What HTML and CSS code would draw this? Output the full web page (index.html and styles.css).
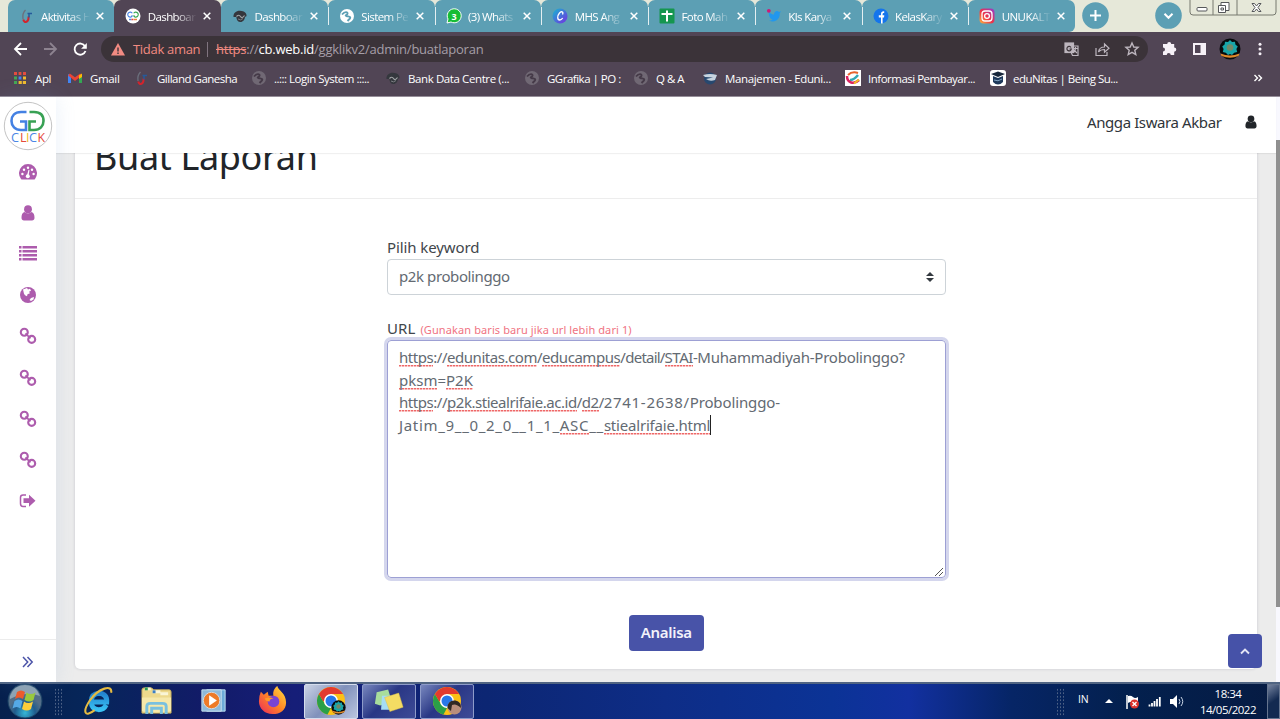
FILE: index.html
```html
<!DOCTYPE html>
<html lang="id">
<head>
<meta charset="utf-8">
<title>Dashboard</title>
<link rel="stylesheet" href="styles.css">
</head>
<body>
<svg class="defs" width="0" height="0">
  <defs>
    <symbol id="x" viewBox="0 0 8 8"><path d="M.7.7l6.6 6.6M7.3.7L.7 7.3" stroke="#fff" stroke-width="1.5"/></symbol>
    <symbol id="gil" viewBox="0 0 16 16"><path d="M6.500 2C4 4.500 3.500 8 4 11" stroke="#6b6f7c" stroke-width="1.300" fill="none"/><path d="M4.300 11.500c.7 4 5.700 3 5.200-3" stroke="#d3232c" stroke-width="2" fill="none"/><path d="M8.500 5.500h4.500M10 5.500v4" stroke="#255a9b" stroke-width="1.500" fill="none"/></symbol>
    <symbol id="mask" viewBox="0 0 16 16"><path d="M1.500 9C1 5 4.500 2.500 8 2.700c4.500 0 7 2.800 6.500 5.300-.5 1-1 .8-1.500.5 0 3-2 5.500-4.500 5.500S4.500 12 4.300 9z" fill="#34373d"/><path d="M4.500 8.500q2.500-2.500 4 0t4-1" stroke="#a3a6a8" stroke-width="1.200" fill="none"/><path d="M6 11q2.500 2 5-.5" stroke="#7b7e83" fill="none"/></symbol>
    <symbol id="globe" viewBox="0 0 16 16"><circle cx="8" cy="8" r="7" fill="currentColor"/><path d="M3 6.500c3-3.500 6-2.500 5.500-.8S5 7.500 8 8.200s4 .6 2.800 2.400L8.500 13" stroke="var(--cut)" stroke-width="1.900" fill="none"/></symbol>
    <symbol id="chain" viewBox="0 0 18 18"><g fill="none" stroke="#ad5cad" stroke-width="2.100"><circle cx="5.300" cy="5.200" r="3.500"/><circle cx="12.700" cy="12.400" r="3.500"/><path d="M6.500 6.300l5 5" stroke-width="1.800"/></g></symbol>
    <symbol id="person" viewBox="0 0 14 16"><circle cx="7" cy="4.200" r="3.900"/><path d="M3.600 7C1.200 7.400.5 10 .5 12.800.5 14.600 1.500 15.500 3 15.500h8c1.500 0 2.500-.9 2.500-2.700 0-2.800-.7-5.400-3.100-5.800C8.800 8.800 5.200 8.800 3.600 7z"/></symbol>
    <symbol id="chrome" viewBox="0 0 30 30"><circle cx="15" cy="15" r="14" fill="#fbc116"/><path d="M2.900 8l6.300 10.500L15 22l-3.500 6.600A14 14 0 0 1 2.900 8z" fill="#2b9f48"/><path d="M2.900 8A14 14 0 0 1 27.100 8H15v7H7z" fill="#e33b2e"/><circle cx="15" cy="15" r="7" fill="#fff"/><circle cx="15" cy="15" r="5.500" fill="#2878e8"/></symbol>
    <symbol id="crest" viewBox="0 0 22 22"><circle cx="11" cy="11" r="10.500" fill="#080b0d"/><path d="M11 2l2 2 3-.3.400 2.800 2.400 2-1.400 2.500.8 3-3 .8L13 17l-2-1-2 1-2.200-2.200-3-.8.800-3L3.200 8.500l2.400-2L6 3.700 9 4z" fill="#18a5a8"/><circle cx="11" cy="9.500" r="3.300" fill="#718a68"/><path d="M1.500 15.500q9.500 4 19 0l-1 2.500q-8.500 3.500-17 0z" fill="#e08a2b"/></symbol>
  </defs>
</svg>

<header class="browser">
  <div class="tabs">
    <div class="tab"><svg class="fav"><use href="#gil"/></svg><span>Aktivitas H</span><svg class="close"><use href="#x"/></svg></div>
    <div class="tab active"><svg class="fav" viewBox="0 0 16 16"><circle cx="8" cy="8" r="7.500" fill="#fff"/><path d="M7.300 5.200A2.500 2.500 0 1 0 7.300 8H6" stroke="#4c86e6" fill="none" stroke-width="1.100"/><path d="M8.700 5.200A2.500 2.500 0 1 1 8.700 8H10" stroke="#39a853" fill="none" stroke-width="1.100"/><path d="M4 11.500h2.500" stroke="#4c86e6" stroke-width="1.500"/><path d="M6.500 11.500h2" stroke="#e94335" stroke-width="1.500"/><path d="M9 11.500h3" stroke="#e9873c" stroke-width="1.500"/></svg><span>Dashboar</span><svg class="close"><use href="#x"/></svg></div>
    <div class="tab"><svg class="fav"><use href="#mask"/></svg><span>Dashboar</span><svg class="close"><use href="#x"/></svg></div>
    <div class="tab sep"><svg class="fav light"><use href="#globe"/></svg><span>Sistem Pe</span><svg class="close"><use href="#x"/></svg></div>
    <div class="tab sep"><svg class="fav" viewBox="0 0 16 16"><path d="M1 15l1-4a7 7 0 1 1 3 3z" fill="#16bd35" stroke="#fff"/><text x="8.200" y="11.500" class="wa">3</text></svg><span>(3) Whats</span><svg class="close"><use href="#x"/></svg></div>
    <div class="tab sep"><svg class="fav" viewBox="0 0 16 16"><defs><linearGradient id="cv" y2="1"><stop stop-color="#14b9d0"/><stop offset="1" stop-color="#782be3"/></linearGradient></defs><circle cx="8" cy="8" r="7.500" fill="url(#cv)"/><path d="M10.500 6.500c1.500-3-1.500-3.500-3-1.500-2.500 3-2.300 7 .2 7 1.300 0 2.300-1 3-2" stroke="#fff" stroke-width="1.300" fill="none"/></svg><span>MHS Ang</span><svg class="close"><use href="#x"/></svg></div>
    <div class="tab sep"><svg class="fav" viewBox="0 0 16 16"><rect x=".5" y=".5" width="15" height="15" rx="1" fill="#15964f"/><path d="M2.500 6h11M8 2.500v11" stroke="#fff" stroke-width="2"/></svg><span>Foto Mah</span><svg class="close"><use href="#x"/></svg></div>
    <div class="tab sep"><svg class="fav" viewBox="0 0 16 16"><path d="M3 4c2 2.200 3.500 2.500 5 2.500C8 3 11.500 2 13 4l2-.7-1.300 2C14.300 11 9 15.500 3 12.500c2 0 3-.3 3.500-1C3.500 10.500 2.500 7 3 4z" fill="#2197ee"/><circle cx="2.800" cy="2.800" r="1.900" fill="#cd1b76"/></svg><span>Kls Karya</span><svg class="close"><use href="#x"/></svg></div>
    <div class="tab sep"><svg class="fav" viewBox="0 0 16 16"><circle cx="8" cy="8" r="7.500" fill="#1475ec"/><path d="M8 15.500V9.500H5.800V7.300H8V6c0-2.200 1.200-3 3.200-2.800v1.900c-1.300 0-1.600.3-1.600 1.200v1h1.700l-.3 2.200H9.600v6z" fill="#fff"/></svg><span>KelasKary</span><svg class="close"><use href="#x"/></svg></div>
    <div class="tab sep last"><svg class="fav" viewBox="0 0 16 16"><defs><linearGradient id="ig" x1="0" y1="1" x2="1" y2="0"><stop stop-color="#fdb73e"/><stop offset=".45" stop-color="#ee3345"/><stop offset="1" stop-color="#913cd2"/></linearGradient></defs><rect x=".5" y=".5" width="15" height="15" rx="4" fill="url(#ig)"/><g stroke="#fff" fill="none" stroke-width="1.300"><rect x="3" y="3" width="10" height="10" rx="3"/><circle cx="8" cy="8" r="2.400"/></g></svg><span>UNUKALT</span><svg class="close"><use href="#x"/></svg></div>
    <svg class="round plus" viewBox="0 0 27 27"><circle cx="13.500" cy="13.500" r="13.300"/><path d="M13.500 8v11M8 13.500h11"/></svg>
    <svg class="round chev" viewBox="0 0 27 27"><circle cx="13.500" cy="13.500" r="13.300"/><path d="M9.500 11.800l4 4 4-4"/></svg>
    <svg class="winctl" viewBox="0 0 88 17"><path d="M1 0v12q0 3 3 3h80q3 0 3-3V0M24 0v15M48 0v15" fill="none" stroke="#77796f"/><g fill="#fff" stroke="#55575a"><rect x="8" y="7.500" width="10" height="3.500" rx="1"/><path d="M32 2.500h8v8h-8z"/><path d="M29.500 5.500h7v7h-7z"/><path d="M32 8h2.500v2H32z"/><path d="M63 3.500h2.500l2 2.500 2-2.500H72L69 7.500l3 4h-2.500l-2-2.500-2 2.500H63l3-4z"/></g></svg>
  </div>

  <div class="toolbar">
    <svg class="nav" viewBox="0 0 90 20"><g fill="none" stroke-width="1.800"><path d="M18 10H6M12 4L6 10l6 6" stroke="#fff"/><path d="M35 10h12M41 4l6 6-6 6" stroke="#8d8390"/><path d="M76 7.200A5.600 5.600 0 1 0 76.500 12" stroke="#fff"/></g><path d="M77.800 4v5.700h-5.700z" fill="#fff"/></svg>
    <div class="address">
      <svg class="warn" viewBox="0 0 14 13"><path d="M7 0l7 12.500H0z" fill="#f28b82"/><path d="M7 4.500v4M7 9.500v1.500" stroke="#3b3339" stroke-width="1.400"/></svg>
      <span class="unsafe">Tidak aman</span><i class="bar"></i>
      <span class="url"><s>https</s>://<b>cb.web.id</b>/ggklikv2/admin/buatlaporan</span>
      <svg class="acts" viewBox="0 0 76 16"><g fill="none" stroke="#bdb6be" stroke-width="1.200"><rect x="1" y="2" width="8.500" height="9.500" fill="#bdb6be"/><path d="M8 5h6v9.500H8.500L7 11"/><path d="M9 7.500h5M11.500 6v1.500c0 2-1 3-2 4M10 9l3 3"/><path d="M7 6.500A2.200 2.200 0 1 0 7.300 8H5.500" stroke="#3b3339"/><path d="M32 7v7.500h11V11M34.500 11c.5-3.500 3-5 6-5V3l4.500 4.200-4.500 4V8.500c-2.500 0-4.500.5-6 2.500z"/><path d="M68 2l1.800 4 4.300.4-3.300 2.900 1 4.200L68 11.300l-3.800 2.200 1-4.200-3.300-2.900 4.300-.4z" stroke-width="1.400"/></g></svg>
    </div>
    <svg class="ext" viewBox="0 0 120 24"><g fill="#f6f1f7"><path d="M15 7h3.200a2 2 0 0 1 4 0h3v3.500a2 2 0 0 1 0 4.200V18h-3.500a2 2 0 0 0-4 0H14v-3.600a2 2 0 0 0 0-4V7z"/><path d="M44 6h13v12H44zm2 2v8h5.500V8z" fill-rule="evenodd"/><circle cx="111" cy="7.300" r="1.500"/><circle cx="111" cy="12" r="1.500"/><circle cx="111" cy="16.800" r="1.500"/></g><use href="#crest" x="70" y="1" width="22" height="22"/></svg>
  </div>

  <div class="bookmarks">
    <a class="w1"><svg viewBox="0 0 16 16"><path d="M2 3.500h3" stroke="#e34d3f" stroke-width="3"/><path d="M6.500 3.500h3" stroke="#e34d3f" stroke-width="3"/><path d="M11 3.500h3" stroke="#e34d3f" stroke-width="3"/><path d="M2 8h3M2 12.500h3" stroke="#44a854" stroke-width="3"/><path d="M6.500 8h3" stroke="#4285f4" stroke-width="3"/><path d="M11 8h3M6.500 12.500H14" stroke="#efba2e" stroke-width="3"/><path d="M5.700 2v12M10.300 2v12" stroke="#514555"/></svg><span>Apl</span></a>
    <a class="w2"><svg viewBox="0 0 16 16"><path d="M1 13V4l3 2v7z" fill="#4285f4"/><path d="M15 13V4l-3 2v7z" fill="#34a853"/><path d="M2 4.500l6 4.700 6-4.700" fill="none" stroke="#ea4335" stroke-width="2.800"/><path d="M12 5.500l3-2V7l-3 2z" fill="#fbbc04"/></svg><span>Gmail</span></a>
    <a class="w3"><svg><use href="#gil"/></svg><span>Gilland Ganesha</span></a>
    <a class="w4"><svg class="dim"><use href="#globe"/></svg><span>..::: Login System :::..</span></a>
    <a class="w5"><svg><use href="#mask"/></svg><span>Bank Data Centre (...</span></a>
    <a class="w6"><svg class="dim"><use href="#globe"/></svg><span>GGrafika | PO :</span></a>
    <a class="w7"><svg class="dim"><use href="#globe"/></svg><span>Q &amp; A</span></a>
    <a class="w8"><svg viewBox="0 0 16 16"><circle cx="8" cy="8.500" r="6" fill="#27486f"/><path d="M1 5q7-2 14 0l-2 5q-5 2-9-1l7-1.500-8-.5z" fill="#c8d4df"/></svg><span>Manajemen - Eduni...</span></a>
    <a class="w9"><svg viewBox="0 0 16 16"><path d="M0 0h16v16H0z" fill="#fff"/><path d="M3 5q4-4 10-2" stroke="#e8622b" stroke-width="2" fill="none"/><path d="M13 5Q9 10 5 10" stroke="#35a7b4" stroke-width="2.500" fill="none"/><path d="M2 6c0 7 7 9 12 4" stroke="#da2360" stroke-width="2.500" fill="none"/><path d="M9 13.500l5-4" stroke="#f2bd21" stroke-width="2"/></svg><span>Informasi Pembayar...</span></a>
    <a class="w10"><svg viewBox="0 0 16 16"><rect width="16" height="16" rx="3" fill="#fff"/><path d="M1 4l7-2.500L15 4 8 7z" fill="#17273b"/><path d="M3 6l5 2 5-2v6q-5 5-10 0z" fill="#1e395b"/><path d="M4 10q4 2 8-1" stroke="#7fa2c2" fill="none"/></svg><span>eduNitas | Being Su...</span></a>
    <svg class="over" viewBox="0 0 10 8"><path d="M1.500 1l3 3-3 3M5.500 1l3 3-3 3" stroke="#fff" stroke-width="1.400" fill="none"/></svg>
  </div>
</header>

<main class="page">
  <aside class="sidebar">
    <svg class="logo" viewBox="0 0 50 50"><circle cx="25" cy="25" r="23.700" fill="#fff" stroke="#c4c4c4"/><g fill="none" stroke-width="2.600"><path d="M23.500 11H18c-6.500 0-9.500 4-9.500 9s3.500 9 9.500 9h5v-8.500h-6" stroke="#4481e3"/><path d="M26.500 11H31c7.500 0 9.500 4 9.500 9S37 29 31 29h-4.500v-8.500H33" stroke="#38a154"/></g><g class="click"><text x="8" y="40.500" fill="#4b86e5" textLength="8" lengthAdjust="spacingAndGlyphs">C</text><text x="17" y="40.500" fill="#e5493a">L</text><text x="23" y="40.500" fill="#f0b91d">I</text><text x="26" y="40.500" fill="#4b86e5" textLength="8" lengthAdjust="spacingAndGlyphs">C</text><text x="34.500" y="40.500" fill="#e5493a" textLength="7.500" lengthAdjust="spacingAndGlyphs">K</text></g></svg>
    <nav>
      <a><svg viewBox="0 0 18 18"><path d="M2 16A9 9.200 0 1 1 16 16q-.5.500-1 .5H3q-.5 0-1-.5z"/><g fill="#fff"><circle cx="3.400" cy="11" r="1.200"/><circle cx="5" cy="6.700" r="1.200"/><circle cx="9" cy="4.700" r="1.200"/><circle cx="13" cy="6.700" r="1.200"/><circle cx="14.600" cy="11" r="1.200"/><circle cx="8.800" cy="13.200" r="2"/><path d="M8 12.500L9.500 6.800l1 .3-1 6z"/></g></svg></a>
      <a><svg><use href="#person" x="2" y="1" width="14" height="16"/></svg></a>
      <a><svg viewBox="0 0 18 18"><path d="M0 1h2.500v2.500H0zM3.500 1H18v2.500H3.500zM0 5h2.500v2.500H0zM3.500 5H18v2.500H3.500zM0 9h2.500v2.500H0zM3.500 9H18v2.500H3.500zM0 13h2.500v2.500H0zM3.500 13H18v2.500H3.500z"/></svg></a>
      <a><svg viewBox="0 0 18 18"><circle cx="9" cy="9" r="8"/><path d="M4 3.500l4-1.500 1 1.500 2-.8 1 2-2 1 1 1.500-2.500 1-.5 2-2-1-1-1.500z" fill="#fff"/><path d="M12 12l3-1-.5 2.500L12 15l-1.500-1z" fill="#fff"/></svg></a>
      <a><svg><use href="#chain"/></svg></a>
      <a><svg><use href="#chain"/></svg></a>
      <a><svg><use href="#chain"/></svg></a>
      <a><svg><use href="#chain"/></svg></a>
      <a><svg viewBox="0 0 18 18"><path d="M7 3H4Q1.500 3 1.500 5.500v6Q1.500 14.500 4 14.500h3" fill="none" stroke="#ad5cad" stroke-width="1.500"/><path d="M4.500 6.300H10V2.800l6.500 6-6.500 6v-3.800H4.500z"/></svg></a>
    </nav>
    <div class="expand"><svg viewBox="0 0 12 12"><path d="M1 1l4.700 5L1 11M5.500 1l4.700 5-4.700 5" stroke="#4b53a8" stroke-width="1.500" fill="none"/></svg></div>
  </aside>

  <section class="content">
    <div class="topbar"><span>Angga Iswara Akbar</span><svg><use href="#person"/></svg></div>
    <div class="scroll">
      <article class="card">
        <div class="head"><h1>Buat Laporan</h1></div>
        <form class="form">
          <label class="l1">Pilih keyword</label>
          <div class="select"><span>p2k probolinggo</span><svg viewBox="0 0 8 10"><path d="M4 0l4 4H0zM0 6h8l-4 4z" fill="#343a40"/></svg></div>
          <label class="l2">URL <small>(Gunakan baris baru jika url lebih dari 1)</small></label>
          <div class="area">
            <div class="tight"><u>https</u>://<u>edunitas.com</u>/<u>educampus</u>/<span class="detail">detail/</span><u>STAI</u>-<span class="uni">Muhammadiyah-Probolinggo?</span></div>
            <div><u>pksm</u>=<u>P2K</u></div>
            <div class="tight"><u>https</u>://<u>p2k.stiealrifaie.ac.id</u>/<u>d2</u>/<span class="wide">2741-2638/</span><span class="prob">Probolinggo-</span></div>
            <div class="tight"><span class="wide">Jatim_9__0_2_0__1_1_<u>ASC</u>__</span><u class="file">stiealrifaie.html</u><i class="caret"></i></div>
            <svg class="grip" viewBox="0 0 9 9"><path d="M0 9l8-8M4 9l4-4" stroke="#555" stroke-width="1"/></svg>
          </div>
          <button type="button"><span>Analisa</span></button>
        </form>
      </article>
    </div>
    <div class="totop"><svg viewBox="0 0 10 7"><path d="M1 5.500l4-4 4 4" stroke="#e4e5f4" stroke-width="1.900" fill="none"/></svg></div>
  </section>
  <div class="track"><i></i></div>
</main>

<footer class="taskbar">
  <div class="start"><svg viewBox="0 0 36 36"><defs><radialGradient id="orb" cy=".85"><stop stop-color="#35b7d8"/><stop offset=".6" stop-color="#205c8e"/><stop offset="1" stop-color="#536e88"/></radialGradient></defs><circle cx="18" cy="18" r="17" fill="url(#orb)" stroke="#1a4265"/><path d="M3 13Q7 2 18 2t15 11q-14-5-30 3z" fill="#cbd9df" opacity=".5"/><path d="M10 9q4-3 8 0l-2 7q-4-3-8 0z" fill="#ee5b2a"/><path d="M19.500 9.500q4 3 9 0l-2 7.500q-4 3-9 0z" fill="#9aca3c"/><path d="M7.500 18q4-3 8 0l-2 7.500q-4-3-8 0z" fill="#55a9e6"/><path d="M17 18.500q4 3 9 0L24 26q-4 3-9 0z" fill="#fdce3a"/></svg></div>
  <i class="dots"></i>
  <div class="app a1"><svg viewBox="0 0 32 32"><defs><linearGradient id="ie" y2="1" x2="0"><stop stop-color="#2383cf"/><stop offset="1" stop-color="#39c2f4"/></linearGradient></defs><path d="M24 20.500Q21.500 25.500 16 25.500 8.500 25 8.500 17T16.500 8.500Q25 9 24.500 17.500H9" stroke="url(#ie)" stroke-width="5" fill="none"/><path d="M29 8C31-1 16 3 7 16-1 28 2 34 12 26" stroke="#e5bb42" stroke-width="2.200" fill="none"/></svg></div>
  <div class="app a2"><svg viewBox="0 0 32 32"><path d="M1 29V5q0-2 2-2h8l2 2h16q2 0 2 2v22z" fill="#edd98d" stroke="#c8ae5c"/><path d="M4 4h6M12 7h8M20 9h8" stroke="#f9f5d7" stroke-width="3"/><path d="M4 4h3" stroke="#2d9b55" stroke-width="3"/><path d="M12 7h3" stroke="#3c7fc5" stroke-width="3"/><path d="M1 13h30v14q-15 3-30 0z" fill="#f6e8aa"/><path d="M6 30v-8q0-3 4-3h12q4 0 4 3v8M11 30v-6h10v6" fill="none" stroke="#78c0df" stroke-width="3"/></svg></div>
  <div class="app a3"><svg viewBox="0 0 32 32"><path d="M9 5h19v22H9z" fill="#6dabd8" stroke="#bfe0f4"/><path d="M4 5h20v22H4z" fill="#8db9da" stroke="#c6dfed"/><circle cx="14" cy="16" r="8.500" fill="#ed7a27" stroke="#d6dadd"/><path d="M11.500 10.500v11l8-5.500z" fill="#fff"/></svg></div>
  <div class="app a4"><svg viewBox="0 0 32 32"><defs><linearGradient id="ff" x1="1" x2="0" y2="1"><stop stop-color="#ffe440"/><stop offset=".5" stop-color="#ff8426"/><stop offset="1" stop-color="#eb265e"/></linearGradient></defs><path d="M4 7l3 3 4-3 1 4 5 0c-1-4 1-8 4-10 1 5 9 7 9 17 0 8-6 12-14 12S2 24 2 17q0-6 2-10z" fill="url(#ff)"/><circle cx="17" cy="17" r="6" fill="#7844d4"/><path d="M8 14q5-2 9 0-4 0-4 3-4 0-5-3z" fill="#ff9b28"/></svg></div>
  <div class="task on"><svg viewBox="0 0 30 30"><use href="#chrome"/><use href="#crest" x="15" y="14" width="15" height="15"/></svg></div>
  <div class="task"><svg viewBox="0 0 34 30"><path d="M3 5l13-3 4 13L7 20 1 18z" fill="#a8dd9c"/><path d="M9 9h13v16H8z" fill="#a6ddf5"/><path d="M12 11l16-5 5 16-15 5z" fill="#f4dc63" stroke="#d8bd49" stroke-width=".5"/></svg></div>
  <div class="task"><svg viewBox="0 0 30 30"><use href="#chrome"/><circle cx="22.500" cy="21.500" r="7" fill="#b98e7c"/><path d="M15.500 22q0-8 8-7.500 6 1.500 5.500 7.500-5-5-9-3l-1 6z" fill="#302824"/></svg></div>
  <div class="tray">
    <i class="dots"></i>
    <span class="lang">IN</span>
    <svg class="icons" viewBox="0 0 84 20"><path d="M5 11l4-4 4 4z" fill="#fff"/><path d="M27 3v14" stroke="#fff" stroke-width="1.500"/><path d="M28 4q3-1 5 1t5 0v6q-3 2-5 0t-5 0z" fill="#fff"/><circle cx="34.500" cy="12" r="4.500" fill="#dc322c"/><path d="M32.500 10l4 4M36.500 10l-4 4" stroke="#fff" stroke-width="1.300"/><path d="M49.500 12.500v2M52 11v3.500M54.500 9v5.500M57 7v7.500M59.800 5v9.500" stroke="#fff" stroke-width="1.800"/><path d="M70 7h3l4-4v13l-4-4h-3z" fill="#fff"/><path d="M79 7q2 2.500 0 5M81 5q3.500 4.500 0 9" stroke="#cbd6e7" fill="none"/></svg>
    <div class="clock"><span>18:34</span><span>14/05/2022</span></div>
    <i class="peek"></i>
  </div>
</footer>
</body>
</html>
```
FILE: styles.css
```css
* { box-sizing: border-box; }
body { margin: 0; width: 1280px; height: 719px; overflow: hidden; display: flex; flex-direction: column; font-family: "Noto Sans", "Open Sans", sans-serif; }
.defs { position: absolute; }
svg { display: block; flex: none; }
i { display: block; }

.browser { height: 97px; background: #514555; border-bottom: 1px solid #968e99; flex: none; font-family: "Open Sans", sans-serif; font-size: 12px; color: #fff; }
.tabs { height: 32px; padding-left: 7.500px; background: #e6e8d9; display: flex; }
.tab { position: relative; width: 106.750px; height: 32px; flex: none; display: flex; align-items: center; padding-left: 11px; background: #5c9fb4; border-radius: 7px 7px 0 0; }
.tab.active { background: #514555; }
.tab.last { border-radius: 7px 7px 6px 0; }
.tab.sep::before { content: ""; position: absolute; left: 0; top: 7px; width: 1px; height: 18px; background: #e4eff1; }
.fav { width: 16px; height: 16px; }
.light { color: #fff; --cut: #5c9fb4; }
.tab span { width: 50px; margin-left: 6.500px; white-space: nowrap; font-size: 11.500px; letter-spacing: -.6px; -webkit-mask-image: linear-gradient(90deg, #000 55%, transparent 98%); mask-image: linear-gradient(90deg, #000 55%, transparent 98%); }
.close { width: 8px; height: 8px; margin-left: 5px; }
.wa { font: bold 9px "Open Sans", sans-serif; fill: #fff; text-anchor: middle; }
.round { width: 27px; height: 27px; margin-top: 2px; }
.round circle { fill: #5c9fb4; }
.round path { stroke: #fff; stroke-width: 2; fill: none; }
.plus { margin-left: 7px; }
.chev { margin-left: 46px; }
.winctl { width: 88px; height: 17px; margin-left: 7px; }

.toolbar { height: 34px; display: flex; align-items: center; padding-left: 9px; }
.nav { width: 90px; height: 20px; }
.address { width: 1047px; height: 26px; margin-left: 2px; border-radius: 13px; background: #3b3339; display: flex; align-items: center; padding-left: 10px; font-size: 13px; }
.warn { width: 14px; height: 13px; }
.unsafe { color: #f28b82; margin-left: 8px; width: 67px; white-space: nowrap; letter-spacing: -.3px; }
.bar { width: 1px; height: 15px; background: #80747f; margin-left: 7px; }
.url { margin-left: 8px; width: 848px; color: #a69fa8; white-space: nowrap; letter-spacing: -.23px; }
.url s { color: #f28b82; }
.url b { font-weight: 400; color: #fff; }
.acts { width: 76px; height: 16px; }
.ext { width: 120px; height: 24px; margin-left: 1px; }

.bookmarks { height: 24px; display: flex; align-items: center; padding-left: 12px; }
.bookmarks a { display: flex; align-items: center; flex: none; white-space: nowrap; font-size: 11.500px; letter-spacing: -.5px; }
.bookmarks a svg { width: 16px; height: 16px; margin-right: 7px; }
.dim { color: #706874; --cut: #453a48; }
.w1 { width: 55px; } .w2 { width: 67px; } .w3 { width: 117px; } .w4 { width: 134px; } .w5 { width: 139px; }
.w6 { width: 109px; } .w7 { width: 69px; } .w8 { width: 143px; } .w9 { width: 145px; } .w10 { width: 263px; }
.bookmarks .w1, .bookmarks .w2, .bookmarks .w8 { letter-spacing: -.35px; }
.bookmarks .w5 { letter-spacing: -.4px; }
.bookmarks .over { width: 10px; height: 8px; }

.page { height: 585px; flex: none; display: flex; background: #ececec; }
.sidebar { position: relative; z-index: 3; width: 56px; background: #fff; box-shadow: 0 0 20px rgba(120, 160, 220, .16); display: flex; flex-direction: column; }
.logo { width: 50px; height: 50px; margin: 3.500px 0 1px 3px; }
.click { font: 12.500px "Open Sans", sans-serif; }
.sidebar nav { flex: 1; }
.sidebar nav a { height: 41.100px; display: flex; align-items: center; justify-content: center; }
.sidebar nav svg { width: 18px; height: 18px; fill: #ad5cad; }
.expand { height: 43px; border-top: 1px solid #ececec; display: flex; align-items: center; justify-content: center; padding-top: 2px; }
.expand svg { width: 12px; height: 12px; }

.content { position: relative; width: 1220px; display: flex; flex-direction: column; }
.topbar { position: relative; z-index: 2; height: 56px; flex: none; background: #fff; box-shadow: 0 1px 1px rgba(0, 0, 0, .06); display: flex; align-items: center; justify-content: flex-end; padding: 0 19px 7px 0; font-size: 15px; letter-spacing: -.4px; color: #30353a; }
.topbar svg { width: 12px; height: 14px; margin-left: 23.500px; fill: #212529; }
.scroll { height: 529px; overflow: hidden; padding: 0 19px; }
.card { height: 536px; margin-top: -20px; background: #fff; border-radius: 5px; box-shadow: 0 0 3px rgba(60, 60, 90, .22); }
.head { height: 66px; padding-left: 19px; border-bottom: 1px solid #ededed; }
h1 { margin: 0; font-weight: 400; font-size: 36px; line-height: 48px; letter-spacing: -.35px; color: #212529; white-space: nowrap; }
.form { width: 558.500px; margin: 37px 0 0 312px; display: flex; flex-direction: column; font-size: 15px; line-height: 22.500px; color: #41464b; white-space: nowrap; }
.l1 { letter-spacing: -.1px; }
.select { height: 36px; margin-bottom: 22px; border: 1px solid #cdd3d8; border-radius: 4px; display: flex; align-items: center; justify-content: space-between; padding: 0 11px; color: #636a72; letter-spacing: -.4px; }
.select svg { width: 8px; height: 10px; }
.l2 { height: 23px; line-height: 22.500px; color: #41464b; letter-spacing: .1px; }
small { font-size: 11px; color: #f07382; letter-spacing: .1px; margin-left: 1px; }
.area { position: relative; height: 238px; border: 1px solid #9da0d4; border-radius: 4px; box-shadow: 0 0 0 3px #d4d6ed; padding: 5.500px 11px; color: #636a72; }
.area div { display: flex; width: max-content; }
.area u { text-decoration: none; background: repeating-linear-gradient(90deg, #ee6868 0 2px, #fac8c8 2px 3px) 0 19px / 100% 1.500px no-repeat; }
.tight { letter-spacing: -.46px; }
.tight .wide { letter-spacing: .68px; display: flex; }
.tight .file { letter-spacing: -.2px; }
.tight .detail { letter-spacing: -.8px; }
.tight .uni { letter-spacing: -.25px; }
.tight .prob { letter-spacing: -.12px; }
.caret { width: 1px; height: 20px; background: #222; margin-top: 1px; }
.grip { position: absolute; right: 1px; bottom: 1px; width: 9px; height: 9px; }
button { align-self: center; width: 75px; height: 36px; margin: 37px 0 0; padding: 0 0 1px; border: 0; border-radius: 4px; background: #4853a8; color: #f2f2fa; font: 600 15px "Noto Sans", sans-serif; letter-spacing: -.3px; }
.totop { position: absolute; right: 14px; bottom: 14px; width: 34px; height: 34px; border-radius: 4px; background: #4652a8; display: flex; align-items: center; justify-content: center; }
.totop svg { width: 10px; height: 7px; }
.track { width: 4px; background: #f8f8fe; padding-top: 43px; }
.track i { height: 467px; background: #909090; }

.taskbar { height: 37px; flex: none; display: flex; align-items: center; border-top: 2px solid #506482; color: #fff; background: linear-gradient(90deg, #06204d 0, #06265a 7%, #121b68 16%, #161e78 23%, #0c2673 38%, #0e2d87 52%, #0b3396 65%, #1230a0 71%, #062566 79%, #03204e 88%, #061b43 100%); }
.start { width: 50px; padding-left: 7px; }
.start svg { width: 36px; height: 36px; margin-top: -1px; }
.dots { width: 9px; height: 28px; margin: 0 11px 0 4px; background: radial-gradient(circle, #4e6286 .6px, transparent 1px) 0 0 / 3px 3.500px; }
.app { display: flex; justify-content: center; flex: none; }
.app svg { width: 31px; height: 31px; margin-top: -2px; }
.a1 { width: 49px; } .a2 { width: 66px; } .a3 { width: 48px; } .a4 { width: 67px; }
.a4 svg { margin-left: 4px; }
.task { width: 54px; height: 35px; margin-right: 4px; border: 1px solid #8e9bc9; border-radius: 2px; background: linear-gradient(135deg, #7887be, #293785 45%, #3e4b97); display: flex; align-items: center; justify-content: center; }
.task.on { background: linear-gradient(135deg, #cbd3e5, #8091bb 50%, #bac5df); border-color: #d5dded; }
.task svg { width: 30px; height: 30px; margin-top: -2px; }
.tray { margin-left: auto; height: 35px; display: flex; align-items: center; font-family: "Open Sans", sans-serif; }
.lang { width: 22px; margin: 0 0 6px 2px; font-size: 10.500px; letter-spacing: -.2px; }
.icons { width: 84px; height: 20px; }
.clock { width: 72px; margin-left: 8px; display: flex; flex-direction: column; align-items: center; font-size: 11.500px; line-height: 16px; letter-spacing: -.5px; }
.peek { width: 13px; height: 35px; margin-left: 3px; border: 1px solid #66758f; background: linear-gradient(145deg, #75839f, #132a51 50%); }
```
